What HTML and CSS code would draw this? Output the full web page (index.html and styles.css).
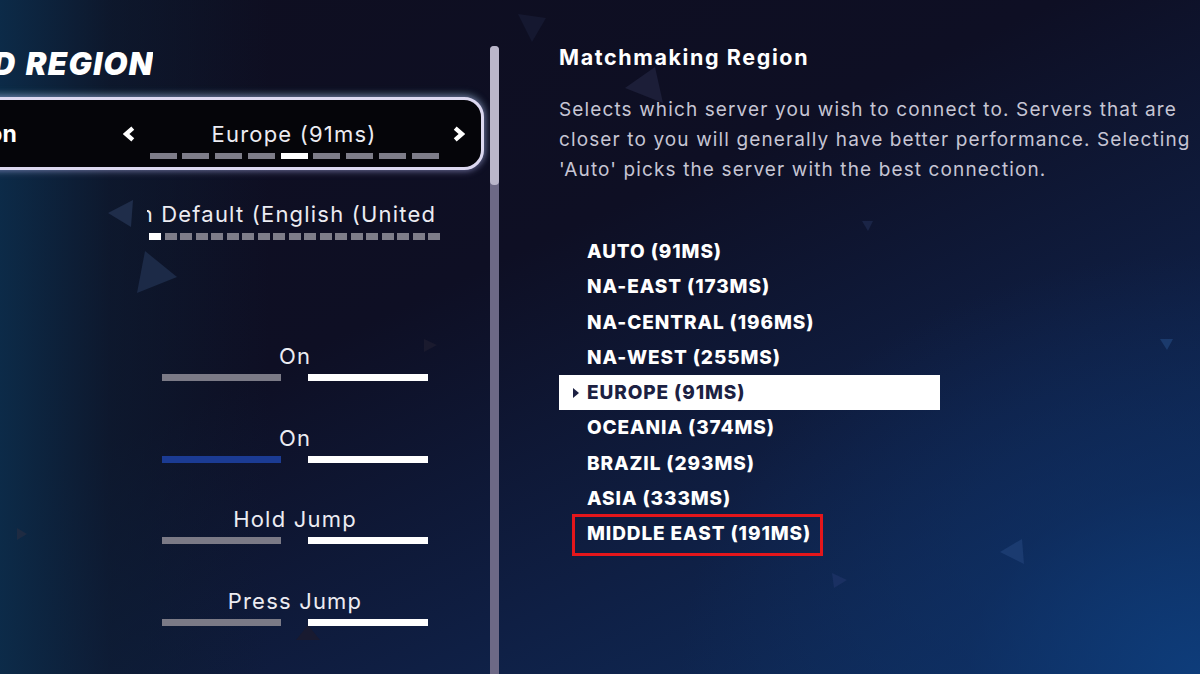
FILE: index.html
```html
<!DOCTYPE html>
<html lang="en">
<head>
<meta charset="utf-8">
<title>Matchmaking Region</title>
<link rel="stylesheet" href="styles.css">
</head>
<body>
<div class="screen">
  <svg class="deco" width="1200" height="674" viewBox="0 0 1200 674" aria-hidden="true">
    <polygon points="108,213 133,200 131,227" fill="#1f2d4a"/>
    <polygon points="145,251 177,277 137,293" fill="#1c2a47"/>
    <polygon points="17,528 27,534 17,540" fill="#1e2b42"/>
    <polygon points="518,14 546,18 532,42" fill="#151830"/>
    <polygon points="625,88 655,67 663,103" fill="#1c1e38"/>
    <polygon points="1000,552 1022,539 1024,564" fill="#1b3b70"/>
    <polygon points="832,573 847,580 834,588" fill="#1a3062"/>
    <polygon points="1160,339 1173,339 1167,350" fill="#1b3a6c"/>
    <polygon points="862,221 873,221 868,231" fill="#1a2446"/>
    <polygon points="424,339 437,345 424,352" fill="#1a1a2e"/>
    <polygon points="308,625 320,640 296,640" fill="#181a30"/>
  </svg>

  <section class="left">
    <h1 class="title"><span>LANGUAGE AND REGION</span></h1>

    <div class="selector">
      <div class="sel-label"><span>Matchmaking Region</span></div>
      <div class="sel-control">
        <svg class="arrow" width="12" height="16" viewBox="0 0 12 16" aria-hidden="true"><polyline points="9.8,2.2 3,8 9.8,13.8" fill="none" stroke="#fff" stroke-width="4.4" stroke-linejoin="miter" stroke-linecap="butt"/></svg>
        <div class="sel-mid">
          <div class="sel-value">Europe (91ms)</div>
          <div class="pips pips-9">
            <span></span><span></span><span></span><span></span><span class="on"></span><span></span><span></span><span></span><span></span>
          </div>
        </div>
        <svg class="arrow" width="12" height="16" viewBox="0 0 12 16" aria-hidden="true"><polyline points="2.2,2.2 9,8 2.2,13.8" fill="none" stroke="#fff" stroke-width="4.4" stroke-linejoin="miter" stroke-linecap="butt"/></svg>
      </div>
    </div>

    <div class="lang">
      <div class="lang-value"><span>Region Default (English (United States))</span></div>
      <div class="pips pips-19">
        <span class="on"></span><span></span><span></span><span></span><span></span><span></span><span></span><span></span><span></span><span></span><span></span><span></span><span></span><span></span><span></span><span></span><span></span><span></span><span></span>
      </div>
    </div>

    <div class="toggles">
      <div class="toggle">
        <div class="toggle-label">On</div>
        <div class="bars"><span class="bar"></span><span class="bar bar-on"></span></div>
      </div>
      <div class="toggle">
        <div class="toggle-label">On</div>
        <div class="bars"><span class="bar bar-blue"></span><span class="bar bar-on"></span></div>
      </div>
      <div class="toggle">
        <div class="toggle-label">Hold Jump</div>
        <div class="bars"><span class="bar"></span><span class="bar bar-on"></span></div>
      </div>
      <div class="toggle">
        <div class="toggle-label">Press Jump</div>
        <div class="bars"><span class="bar"></span><span class="bar bar-on"></span></div>
      </div>
    </div>
  </section>

  <div class="scrollbar"><div class="thumb"></div></div>

  <section class="right">
    <h2 class="heading">Matchmaking Region</h2>
    <p class="desc">Selects which server you wish to connect to. Servers that are<br>closer to you will generally have better performance. Selecting<br>'Auto' picks the server with the best connection.</p>
    <ul class="regions">
      <li>Auto (91ms)</li>
      <li>NA-East (173ms)</li>
      <li>NA-Central (196ms)</li>
      <li>NA-West (255ms)</li>
      <li class="selected">Europe (91ms)</li>
      <li>Oceania (374ms)</li>
      <li>Brazil (293ms)</li>
      <li>Asia (333ms)</li>
      <li class="flagged">Middle East (191ms)</li>
    </ul>
  </section>
</div>
</body>
</html>
```

FILE: styles.css
```css
html, body {
  margin: 0;
  padding: 0;
}

body {
  width: 1200px;
  height: 674px;
  overflow: hidden;
  background: #0e0d1d;
  font-family: Inter, "Noto Sans", "Liberation Sans", sans-serif;
  color: #fff;
}

.screen {
  position: relative;
  width: 1200px;
  height: 674px;
  display: grid;
  grid-template-columns: 490px 9px 1fr;
  overflow: hidden;
  background:
    linear-gradient(90deg, rgba(12, 44, 74, 0.95) 0px, rgba(13, 30, 52, 0.6) 110px, rgba(14, 13, 29, 0) 270px),
    radial-gradient(ellipse 520px 420px at 1200px 674px, rgba(14, 62, 125, 0.9) 0%, rgba(14, 50, 105, 0.55) 45%, rgba(14, 30, 70, 0) 100%),
    linear-gradient(155deg, #0e0e20 0%, #0e0f24 40%, #0f1f44 70%, #0e3062 100%);
}

.deco {
  position: absolute;
  left: 0;
  top: 0;
  z-index: 0;
  pointer-events: none;
}

.left, .right, .scrollbar {
  position: relative;
  z-index: 1;
}

/* ---------- left panel ---------- */
.left {
  overflow: hidden;
  padding-top: 44px;
}

.title {
  margin: 0;
  width: 153px;
  display: flex;
  justify-content: flex-end;
  overflow: hidden;
  white-space: nowrap;
  font-size: 31px;
  line-height: 40px;
  font-weight: 900;
  font-style: italic;
  letter-spacing: 1.3px;
  word-spacing: 2px;
  color: #fff;
}

.title span {
  margin-right: -1px;
}

.selector {
  margin-top: 13px;
  margin-left: -40px;
  width: 524px;
  height: 73px;
  box-sizing: border-box;
  border: 3px solid #dcd8f0;
  border-radius: 20px;
  background: #050509;
  box-shadow: 0 0 7px 1px rgba(175, 165, 235, 0.55), 0 -3px 8px rgba(110, 210, 185, 0.25);
  display: flex;
  align-items: center;
}

.sel-label {
  width: 54px;
  flex: none;
  display: flex;
  justify-content: flex-end;
  overflow: hidden;
  white-space: nowrap;
  font-size: 23px;
  font-weight: 700;
  letter-spacing: 0.2px;
  color: #fff;
}

.sel-control {
  margin-left: 106px;
  width: 342px;
  display: grid;
  grid-template-columns: 12px 1fr 12px;
  align-items: center;
}

.sel-mid {
  padding-top: 12px;
  display: flex;
  flex-direction: column;
  align-items: center;
  gap: 6px;
}

.sel-value {
  font-size: 22px;
  line-height: 26px;
  letter-spacing: 1.2px;
  color: #ececf2;
}

.pips {
  display: flex;
}

.pips span {
  background: #7e7d89;
}

.pips span.on {
  background: #fff;
}

.pips-9 {
  gap: 5.75px;
}

.pips-9 span {
  width: 27px;
  height: 6px;
}

.lang {
  margin-top: 31px;
  margin-left: 147px;
  width: 293px;
}

.lang-value {
  overflow: hidden;
  white-space: nowrap;
  font-size: 22px;
  line-height: 26px;
  letter-spacing: 1.2px;
  color: #ececf2;
}

.lang-value span {
  display: inline-block;
  margin-left: -72px;
}

.pips-19 {
  margin-top: 6px;
  margin-left: 2px;
  gap: 3.5px;
}

.pips-19 span {
  width: 12px;
  height: 7px;
}

.toggles {
  margin-top: 104px;
  margin-left: 162px;
  width: 266px;
  display: flex;
  flex-direction: column;
  gap: 44.5px;
}

.toggle-label {
  text-align: center;
  font-size: 22px;
  line-height: 24px;
  letter-spacing: 1.2px;
  margin-bottom: 6px;
  color: #ececf2;
}

.bars {
  display: flex;
  justify-content: space-between;
}

.bar {
  width: 119px;
  height: 7px;
  background: #7b7a86;
}

.bar-on {
  width: 120px;
  background: #fff;
}

.bar-blue {
  background: #1b3b93;
}

/* ---------- scrollbar ---------- */
.scrollbar {
  margin-top: 46px;
  background: #6d6986;
  border-radius: 4px 4px 0 0;
}

.thumb {
  height: 139px;
  background: #bab6ca;
  border-radius: 4px;
}

/* ---------- right panel ---------- */
.right {
  padding: 43px 0 0 60px;
}

.heading {
  margin: 0;
  font-size: 21.5px;
  line-height: 28px;
  font-weight: 700;
  letter-spacing: 1.6px;
  color: #fff;
}

.desc {
  margin: 24px 0 0;
  font-size: 19px;
  line-height: 30px;
  letter-spacing: 1.12px;
  white-space: nowrap;
  color: #c6c5d4;
}

.regions {
  list-style: none;
  margin: 49px 0 0;
  padding: 0;
  width: 381px;
}

.regions li {
  position: relative;
  height: 35.25px;
  display: flex;
  align-items: center;
  padding-left: 14px;
  font-size: 19px;
  font-weight: 800;
  letter-spacing: 0.9px;
  text-transform: uppercase;
  color: #fff;
}

.regions li::before {
  content: "";
  width: 0;
  height: 0;
  border-top: 5.5px solid transparent;
  border-bottom: 5.5px solid transparent;
  border-left: 6px solid transparent;
  margin-right: 8px;
}

.regions li.selected {
  background: #fff;
  color: #1c2142;
}

.regions li.selected::before {
  border-left-color: #1c2142;
}

.regions li.flagged::after {
  content: "";
  position: absolute;
  left: 13px;
  top: -2.5px;
  width: 251px;
  height: 42px;
  box-sizing: border-box;
  border: 3px solid #e3161b;
}
```
